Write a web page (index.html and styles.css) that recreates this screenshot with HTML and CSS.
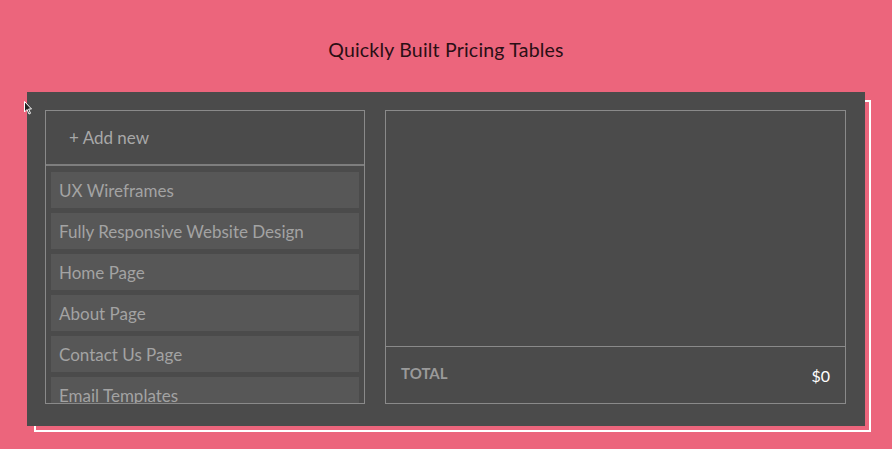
FILE: index.html
```html
<!DOCTYPE html>
<html>
<head>
<meta charset="utf-8">
<link rel="stylesheet" href="styles.css">
</head>
<body>
<header class="title">Quickly Built Pricing Tables</header>
<div class="stage">
  <div class="outline"></div>
  <div class="panel">
    <div class="list-box">
      <div class="add-new">+ Add new</div>
      <div class="items">
        <div class="item">UX Wireframes</div>
        <div class="item">Fully Responsive Website Design</div>
        <div class="item">Home Page</div>
        <div class="item">About Page</div>
        <div class="item">Contact Us Page</div>
        <div class="item">Email Templates</div>
      </div>
    </div>
    <div class="summary-box">
      <div class="selected"></div>
      <div class="total-row">
        <span class="total-label">TOTAL</span>
        <span class="total-value">$0</span>
      </div>
    </div>
    <svg class="cursor" width="8" height="14" viewBox="0 0 8 14"><path d="M0.5 0.5 L0.5 11 L3 8.5 L5 13 L6.5 12.3 L4.6 8 L7.5 8 Z" fill="#222" stroke="#fff" stroke-width="1"/></svg>
  </div>
</div>
</body>
</html>
```
FILE: styles.css
```css
html, body {
  margin: 0;
  padding: 0;
}
body {
  background: #ec657c;
  width: 892px;
  height: 449px;
  overflow: hidden;
  font-family: "Lato", "Liberation Sans", sans-serif;
}
.title {
  height: 92px;
  box-sizing: border-box;
  padding-top: 38px;
  text-align: center;
  font-size: 19.5px;
  font-weight: 400;
  color: #2a0f15;
  letter-spacing: 0.2px;
  line-height: 24px;
}
.stage {
  position: relative;
  margin-left: 27px;
  width: 838px;
}
.outline {
  position: absolute;
  left: 7px;
  top: 8px;
  width: 837px;
  height: 332px;
  border: 2px solid #ffffff;
  box-sizing: border-box;
}
.panel {
  position: relative;
  height: 334px;
  background: #4b4b4b;
  box-sizing: border-box;
  padding: 18px 19px 22px 18px;
  display: flex;
  gap: 20px;
}
.cursor {
  position: absolute;
  left: -3px;
  top: 9px;
}
.list-box {
  width: 320px;
  height: 294px;
  box-sizing: border-box;
  border: 1px solid #8a8a8a;
  display: flex;
  flex-direction: column;
}
.add-new {
  height: 55px;
  flex: none;
  box-sizing: border-box;
  border-bottom: 2px solid #7e7e7e;
  padding-left: 23px;
  display: flex;
  align-items: center;
  font-size: 17px;
  color: #a8a8a8;
}
.items {
  flex: 1;
  overflow: hidden;
  padding: 6px 5px 0 5px;
}
.item {
  height: 36px;
  margin-bottom: 5px;
  background: #575757;
  box-sizing: border-box;
  padding-left: 8px;
  display: flex;
  align-items: center;
  font-size: 17px;
  color: #a3a3a3;
}
.summary-box {
  flex: 1;
  box-sizing: border-box;
  border: 1px solid #8a8a8a;
  display: flex;
  flex-direction: column;
}
.selected {
  flex: 1;
  border-bottom: 1px solid #8a8a8a;
}
.total-row {
  height: 56px;
  flex: none;
  display: flex;
  justify-content: space-between;
  align-items: center;
  padding: 0 15px 0 15px;
}
.total-label {
  font-size: 15px;
  font-weight: 700;
  color: #9a9a9a;
  margin-top: -5px;
}
.total-value {
  font-size: 16px;
  color: #ffffff;
}
```
